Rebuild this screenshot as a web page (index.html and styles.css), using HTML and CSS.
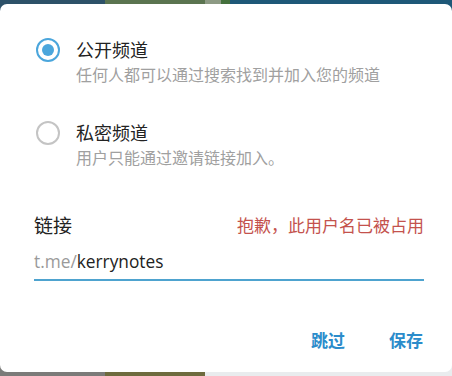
FILE: index.html
```html
<!DOCTYPE html>
<html lang="zh-CN">
<head>
<meta charset="utf-8">
<link rel="stylesheet" href="styles.css">
</head>
<body>
<div class="screen">
  <div class="dialog">
    <div class="option">
      <div class="option-head">
        <span class="radio radio-on"><span class="dot"></span></span>
        <span class="option-title">公开频道</span>
      </div>
      <div class="option-desc">任何人都可以通过搜索找到并加入您的频道</div>
    </div>
    <div class="option option-second">
      <div class="option-head">
        <span class="radio"></span>
        <span class="option-title">私密频道</span>
      </div>
      <div class="option-desc">用户只能通过邀请链接加入。</div>
    </div>
    <div class="link-head">
      <span class="link-label">链接</span>
      <span class="link-error">抱歉，此用户名已被占用</span>
    </div>
    <div class="link-field"><span class="prefix">t.me/</span><span class="value">kerrynotes</span></div>
    <div class="actions">
      <span class="btn">跳过</span>
      <span class="btn">保存</span>
    </div>
  </div>
</div>
</body>
</html>
```
FILE: styles.css
```css
html, body {
  margin: 0;
  padding: 0;
}
body {
  width: 452px;
  height: 376px;
  overflow: hidden;
  font-family: "Open Sans", "Noto Sans CJK SC", sans-serif;
}
.screen {
  box-sizing: border-box;
  height: 376px;
  padding: 4px 0;
  background:
    linear-gradient(to right, #2d5168 0, #2d5168 105px, #5b7450 105px, #5b7450 205px, #8d9a84 205px, #8d9a84 221px, #44703c 221px, #44703c 230px, #1e5878 230px) top / 100% 50% no-repeat,
    linear-gradient(to right, #7b7b79 0, #7b7b79 105px, #6e6b3e 105px, #6e6b3e 205px, #e9ecee 205px) bottom / 100% 50% no-repeat;
}
.dialog {
  box-sizing: border-box;
  height: 368px;
  background: #ffffff;
  border-radius: 7px;
  padding: 35px 28px 0 34px;
  display: flex;
  flex-direction: column;
}
.option {
  display: flex;
  flex-direction: column;
  gap: 4px;
}
.option-second {
  margin-top: 37px;
}
.option-head {
  display: flex;
  align-items: center;
  height: 22px;
  gap: 16px;
  padding-left: 2px;
}
.radio {
  box-sizing: border-box;
  width: 24px;
  height: 24px;
  border-radius: 50%;
  border: 2px solid #c4c4c4;
  display: flex;
  align-items: center;
  justify-content: center;
  flex: none;
}
.radio-on {
  border-color: #4ba6dc;
}
.dot {
  width: 12px;
  height: 12px;
  border-radius: 50%;
  background: #4ba6dc;
}
.option-title {
  font-size: 18px;
  line-height: 22px;
  color: #222222;
}
.option-desc {
  padding-left: 42px;
  font-size: 16px;
  line-height: 20px;
  color: #a0a0a0;
}
.link-head {
  margin-top: 45px;
  display: flex;
  justify-content: space-between;
  align-items: center;
  height: 26px;
}
.link-label {
  font-size: 19px;
  line-height: 26px;
  color: #222222;
}
.link-error {
  font-size: 17px;
  line-height: 22px;
  color: #c4524d;
}
.link-field {
  margin-top: 11px;
  font-size: 17.3px;
  line-height: 24px;
  padding-bottom: 5px;
  border-bottom: 2px solid #4ea3cf;
}
.prefix {
  color: #9a9a9a;
}
.value {
  color: #222222;
}
.actions {
  margin-top: 49px;
  display: flex;
  justify-content: flex-end;
  gap: 44px;
  padding-right: 1px;
}
.btn {
  font-size: 17px;
  line-height: 22px;
  font-weight: 700;
  color: #2b8ccb;
}
```
